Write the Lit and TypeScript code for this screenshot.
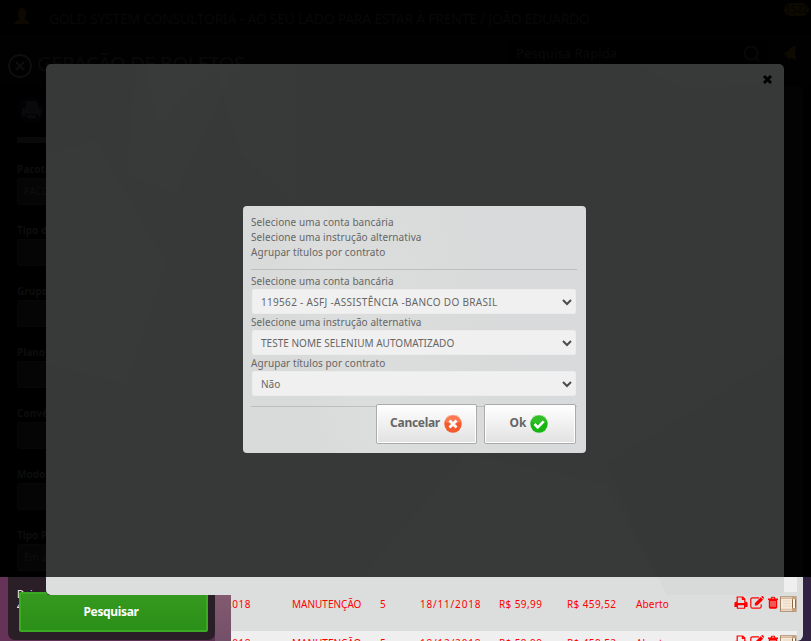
import { LitElement, html, css, svg } from "lit";
import { customElement, property } from "lit/decorators.js";

const printer = html`<svg class="ic" viewBox="0 0 14 14" width="14" height="14"><path d="M3.2 6.5V1h5.6l2 2v3.5M8.4 1v2.4h2.4" fill="none" stroke="currentColor" stroke-width="1.2"/><path fill="currentColor" fill-rule="evenodd" d="M2 5.8h1.5V7h7V5.8H12q1.6 0 1.6 1.7V11h-2.4v1.8H2.8V11H.4V7.500Q.4 5.800 2 5.800zM4 9.200v2.500h6V9.200z"/></svg>`;
const edit = html`<svg class="ic" viewBox="0 0 14 14" width="14" height="14"><path d="M9 1.800H2.600Q.8 1.800.8 3.600v6.800q0 1.800 1.800 1.800h6.800q1.800 0 1.800-1.800V8.300" fill="none" stroke="currentColor" stroke-width="1.200"/><path fill="currentColor" d="M4.800 9.600V7.200L10.700 1.300l2.400 2.400-5.900 5.900zM11.200.8l.8-.7q.4-.2.8.1l1.100 1.200q.3.400 0 .8l-.6.700z"/></svg>`;
const trash = html`<svg class="ic" viewBox="0 0 12 14" width="12" height="14"><path fill="currentColor" fill-rule="evenodd" d="M3.600 2.600 4.300.8h3.400l.7 1.800H11v1.300h-.8V11q0 1.800-1.500 1.800H3.300Q1.800 12.800 1.800 11V3.900H1V2.600zm1.200 0h2.400l-.3-.8H5.100zM3.600 5v5.800h.8V5zm2 0v5.800h.8V5zm2 0v5.800h.8V5z"/></svg>`;
const scroll = html`<svg class="scroll" viewBox="0 0 17 16" width="17" height="16"><rect x=".5" y=".8" width="15.500" height="14.500" fill="#f6eadb" stroke="#a98665"/><path d="M1 2.500h12M1 13.300h12" stroke="#d6b896"/><path d="M3 5h8M3 7.500h8M3 10h8" stroke="#e6d2bb" stroke-width=".8"/><rect x="12.500" y="2.500" width="3" height="10.500" rx="1.200" fill="#fff6e8" stroke="#8b6544"/><path d="M12 1h4v2h-4zM12 13h4v2h-4z" fill="#c9a27c"/></svg>`;
const facets = svg`<path d="M90 0 190 0 130 130 80 110z" fill="#c8e8dc" opacity=".008"/><path d="M100 0 168 0 110 60z" fill="#a0d8c8" opacity=".012"/><path d="M168 0 250 0 250 140 195 90z" fill="#fff" opacity=".008"/><path d="M590 0 738 0 738 18 640 26z" fill="#c8e8dc" opacity=".012"/><path d="M0 90 50 76 120 200 80 320 0 300z" fill="#c8e8dc" opacity=".008"/><path d="M300 531 420 390 560 420 620 531z" fill="#fff" opacity=".008"/><path d="M560 400 738 290V531H620z" fill="#000" opacity=".015"/>`;

@customElement("select-field")
class SelectField extends LitElement {
  @property() label = "";
  @property() value = "";
  @property() kind = "";
  static styles = css`
    :host { display: block; height: 41px; }
    .label { height: 17px; line-height: 17px; letter-spacing: var(--ls, 0); white-space: nowrap; }
    .box { height: 25px; margin: -1px 2px 0 1px; padding: 0 3px 0 8px; background: #f0f0f0; border: 1px solid #ececec; box-sizing: border-box; border-radius: 2px; display: flex; align-items: center; justify-content: space-between; }
    .value { white-space: nowrap; font-size: 10px; }
    .bank { letter-spacing: .31px; }
    .test { letter-spacing: .02px; }
  `;
  render() {
    return html`<div class="label">${this.label}</div>
      <div class="box"><span class="value ${this.kind}">${this.value}</span>
      <svg width="10" height="8" viewBox="0 0 10 8"><path d="M1 2l4 4 4-4" fill="none" stroke="#4d4d4d" stroke-width="2"/></svg></div>`;
  }
}

@customElement("app-root")
class AppRoot extends LitElement {
  static styles = css`
    :host { display: block; width: 811px; height: 641px; font: 10px "Noto Sans", "Open Sans", sans-serif; }
    .page { position: relative; width: 811px; height: 641px; overflow: hidden; background: #000; display: flex; flex-direction: column; white-space: nowrap; }
    .head { height: 35px; flex: none; display: flex; align-items: center; background: #000; color: #080808; font-size: 14px; border-bottom: 1px solid #030303; padding-left: 13px; }
    .user { width: 18px; height: 18px; margin-right: 18px; margin-bottom: 2px; }
    .company { letter-spacing: -.27px; padding-top: 2px; }
    .badge { position: absolute; left: 784px; top: 3px; width: 25px; height: 13px; border-radius: 7px; background: #0c0900; color: #020200; font-size: 10px; line-height: 13px; text-align: center; }
    .title { height: 50px; flex: none; display: flex; align-items: flex-start; padding: 0 0 0 8px; background: #010101; color: #090909; font-size: 20px; }
    .title .x { margin-top: 18px; }
    .title .name { margin: 16px 0 0 5px; line-height: 24px; width: 470px; letter-spacing: -.4px; }
    .search { flex: none; margin: 4px 14px 0 0; width: 261px; height: 26px; background: #000; color: #0a0a0a; font-size: 13px; display: flex; align-items: center; justify-content: space-between; padding: 0 8px 0 9px; box-sizing: border-box; letter-spacing: .1px; }
    .bell { margin-top: 9px; }
    .form { height: 491px; flex: none; display: flex; justify-content: space-between; }
    .side { width: 198px; margin-left: 8px; padding: 0 0 0 9px; color: #0d0d0d; font-size: 10px; font-weight: bold; background: #000; }
    .side .print { display: block; margin: 11px 0 0 0; }
    .bar { width: 190px; height: 6px; background: #090909; margin: 14px 0 18px; }
    .group { height: 61px; }
    .group .cap { height: 17px; line-height: 16px; }
    .group .inp { height: 27px; box-sizing: border-box; border: 1px solid #070707; background: #050505; border-radius: 2px; padding-left: 6px; line-height: 25px; font-weight: normal; color: #0e0e0e; }
    .edge { width: 19px; margin-right: 8px; background: #030303; border-radius: 0 5px 0 0; }
    .foot { height: 64px; flex: none; display: flex; background: linear-gradient(90deg, #653258, #542d4f 50%, #302240); }
    .filter { width: 207px; height: 63px; margin-left: 8px; background: #2a1e27; border-radius: 0 0 7px 7px; color: #fff; padding: 11px 0 0 9px; box-sizing: border-box; font-size: 10px; line-height: 12px; }
    .gap { width: 16px; background: linear-gradient(#895e72, #735069); }
    .table { width: 572px; display: flex; flex-direction: column; background: #dcdedd; color: #f00; border-radius: 0 0 6px 0; overflow: hidden; }
    .strip { height: 18px; background: linear-gradient(#dcdedd, #dcdedd) 0 15px / 100% 3px no-repeat, linear-gradient(90deg, #dcdedd 553px, #efefef 553px, #efefef 566px, #dcdedd 566px); flex: none; }
    .row { height: 36px; flex: none; display: grid; grid-template-columns: 61px 88px 40px 79px 68px 69px 98px 16px 17px 13px 18px; align-items: start; box-sizing: border-box; }
    .row.alt { background: #efefef; width: 566px; height: 12px; padding-top: 3px; overflow: hidden; }
    .cell { margin-top: 2px; line-height: 15px; font-size: 10px; }
    .year { margin-left: -5px; letter-spacing: .5px; }
    .date { letter-spacing: .8px; }
    .money { letter-spacing: .4px; }
    .status { letter-spacing: .15px; }
    .ic { margin-top: 1px; }
    .scroll { margin-top: 1px; }
    .panel { position: absolute; left: 46px; top: 64px; width: 738px; height: 531px; border-radius: 5px; overflow: hidden; background: linear-gradient(#373838 513px, #dcdedd 513px); }
    .panel .tex { display: block; }
    .close { position: absolute; left: 762px; top: 74px; }
    .go { position: absolute; left: 19px; top: 592px; width: 189px; height: 40px; box-sizing: border-box; border: 2px solid #3ba924; border-radius: 2px; background: linear-gradient(#36991f, #2b9018); color: #fff; font-weight: bold; font-size: 12px; text-align: center; line-height: 35px; padding-right: 5px; letter-spacing: -.35px; clip-path: polygon(0 0, 27px 0, 29px 3px, 100% 3px, 100% 100%, 0 100%); }
    .dialog { position: absolute; left: 243px; top: 206px; width: 343px; height: 247px; border-radius: 4px; box-sizing: border-box; padding: 9px 8px 0; color: #666; background: linear-gradient(75deg, #d9dbda 20%, #dcdedd 32%, #dadcdb 55%, #d8dadb 80%, #d9dadc); --ls: .08px; }
    .line { height: 15px; line-height: 15px; letter-spacing: .08px; }
    .rule { height: 1px; background: #bdbfbe; }
    .r1 { margin: 9px 1px 3px 0; }
    .fields { height: 123px; }
    .r2 { margin: 10px 1px 0 0; }
    .actions { display: flex; justify-content: flex-end; gap: 7px; margin: -3px 2px 0 0; position: relative; }
    .btn { height: 40px; box-sizing: border-box; border: 1px solid #aaa; border-radius: 2px; box-shadow: inset 0 0 0 1px #fff; background: linear-gradient(#fff, #e1e1e1); display: flex; align-items: center; justify-content: center; gap: 4px; font-weight: bold; font-size: 12px; }
    .cancel { width: 101px; letter-spacing: -.3px; padding-right: 1px; }
    .ok { width: 92px; padding-right: 2px; }
    .btn span { margin-top: -3px; }
  `;
  row(alt: boolean) {
    return html`<div class="row ${alt ? "alt" : ""}">
      <span class="cell year">2018</span><span class="cell">MANUTENÇÃO</span><span class="cell">5</span>
      <span class="cell date">${alt ? "18/12/2018" : "18/11/2018"}</span><span class="cell money">R$ 59,99</span><span class="cell money">R$ 459,52</span>
      <span class="cell status">Aberto</span>${printer}${edit}${trash}${scroll}</div>`;
  }
  render() {
    const groups = [["Pacote", "PACOTE"], ["Tipo de", ""], ["Grupo", ""], ["Plano", ""], ["Convênio", ""], ["Modo", ""], ["Tipo Pes", "Em aberto"]];
    return html`<div class="page">
      <div class="head">
        <svg class="user" viewBox="0 0 18 18"><path d="M9 0q4 0 4 5 0 4-2 6 5 2 6 5H1q1-3 6-5-2-2-2-6 0-5 4-5z" fill="#0e0900"/></svg>
        <span class="company">GOLD SYSTEM CONSULTORIA - AO SEU LADO PARA ESTAR À FRENTE / JOÃO EDUARDO</span>
        <div class="badge">1522</div>
      </div>
      <div class="title">
        <svg class="x" width="24" height="24" viewBox="0 0 24 24"><circle cx="12" cy="12" r="11" fill="none" stroke="#0e0e0e" stroke-width="1.800"/><path d="M8 8l8 8M16 8l-8 8" stroke="#0e0e0e" stroke-width="2"/></svg>
        <span class="name">GERAÇÃO DE BOLETOS</span>
        <div class="search"><span>Pesquisa Rapida</span><svg width="17" height="17" viewBox="0 0 17 17"><circle cx="8" cy="8" r="6.500" fill="none" stroke="#080808" stroke-width="2"/><path d="M12 13l4 3" stroke="#080808" stroke-width="2"/></svg></div>
        <svg class="bell" width="15" height="16" viewBox="0 0 15 16"><path d="M0 9Q6 7 9 2l5-1-1 8 1 6-5-2-3 1-1-3z" fill="#0e0a00"/></svg>
      </div>
      <div class="form">
        <div class="side">
          <svg class="print" width="28" height="26" viewBox="0 0 28 26"><circle cx="14" cy="13" r="13" fill="#020205"/><path d="M9 4h10l2 3v4h3v8h-3v-2H8v2H5v-8h4zM10 18h9v3h-9z" fill="#09090b"/></svg>
          <div class="bar"></div>
          ${groups.map(([c, v]) => html`<div class="group"><div class="cap">${c}</div><div class="inp">${v}</div></div>`)}
        </div>
        <div class="edge"></div>
      </div>
      <div class="foot">
        <div class="filter">Dei<br />4</div>
        <div class="gap"></div>
        <div class="table"><div class="strip"></div>${this.row(false)}${this.row(true)}</div>
      </div>
      <div class="panel"><svg class="tex" width="738" height="531" viewBox="0 0 738 531">${facets}</svg></div>
      <svg class="close" width="11" height="11" viewBox="0 0 11 11"><path d="M2 2l7 7M9 2l-7 7" stroke="#000" stroke-width="3"/></svg>
      <div class="go">Pesquisar</div>
      <div class="dialog">
        <div class="line">Selecione uma conta bancária</div>
        <div class="line">Selecione uma instrução alternativa</div>
        <div class="line">Agrupar títulos por contrato</div>
        <div class="rule r1"></div>
        <div class="fields">
          <select-field label="Selecione uma conta bancária" kind="bank" value="119562 - ASFJ -ASSISTÊNCIA -BANCO DO BRASIL"></select-field>
          <select-field label="Selecione uma instrução alternativa" kind="test" value="TESTE NOME SELENIUM AUTOMATIZADO"></select-field>
          <select-field label="Agrupar títulos por contrato" value="Não"></select-field>
        </div>
        <div class="rule r2"></div>
        <div class="actions">
          <div class="btn cancel"><span>Cancelar</span><svg width="18" height="18" viewBox="0 0 18 18"><circle cx="9" cy="9" r="8.700" fill="#f45a2c"/><path d="M1 7a8 8 0 0 1 16 0Q9 10 1 7z" fill="#ff9878" opacity=".5"/><path d="M5.500 5.500l7 7M12.500 5.500l-7 7" stroke="#fff" stroke-width="2.800"/></svg></div>
          <div class="btn ok"><span>Ok</span><svg width="18" height="18" viewBox="0 0 18 18"><circle cx="9" cy="9" r="8.700" fill="#17b512"/><path d="M1 7a8 8 0 0 1 16 0Q9 10 1 7z" fill="#62d251" opacity=".35"/><path d="M4.500 9l3.200 3.300 6-6" fill="none" stroke="#fff" stroke-width="2.600"/></svg></div>
        </div>
      </div>
    </div>`;
  }
}
